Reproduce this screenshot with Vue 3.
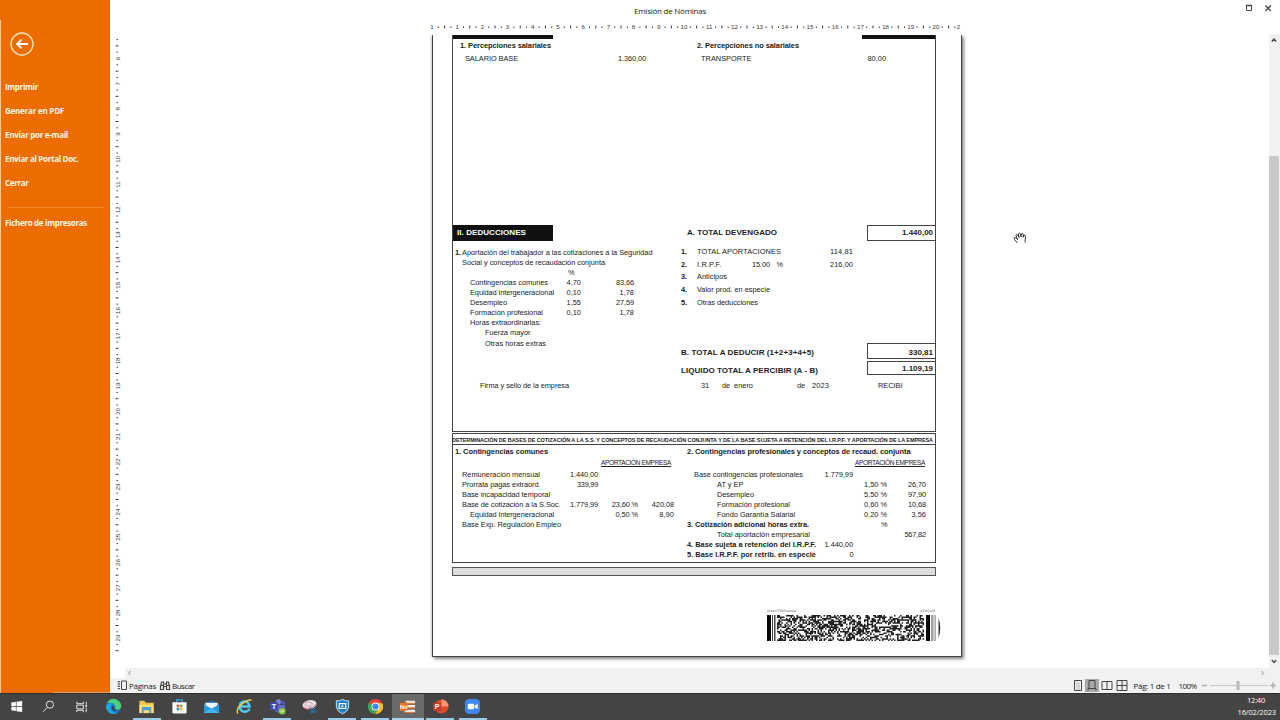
<script setup>
import { ref } from 'vue';

//stretch or tighten a text so it takes the printed width
const vFit = {
    mounted(el, { value }) {
        if (!value) return
        const natural = el.getBoundingClientRect().width
        el.style.letterSpacing = (value - natural) / el.textContent.length + 'px'
    }
}

const menu = ref([
    { text: 'Imprimir', w: 33 },
    { text: 'Generar en PDF', w: 59 },
    { text: 'Enviar por e-mail', w: 63 },
    { text: 'Enviar al Portal Doc.', w: 73.5 },
    { text: 'Cerrar', w: 23.5 },
])

//left side of the deductions: label, width, percent, amount, indent
const aportaciones = ref([
    { label: 'Contingencias comunes', w: 78, pct: '4,70', amount: '83,66' },
    { label: 'Equidad intergeneracional', w: 84, pct: '0,10', amount: '1,78' },
    { label: 'Desempleo', w: 37, pct: '1,55', amount: '27,59' },
    { label: 'Formación profesional', w: 73, pct: '0,10', amount: '1,78' },
    { label: 'Horas extraordinarias:', w: 71 },
    { label: 'Fuerza mayor', w: 45.5, sub: true },
    { label: 'Otras horas extras', w: 61, sub: true },
])

const deducciones = ref([
    { n: '1.', label: 'TOTAL APORTACIONES', w: 84, amount: '114,81' },
    { n: '2.', label: 'I.R.P.F.', w: 24.5, pct: '15.00', amount: '216,00' },
    { n: '3.', label: 'Anticipos', w: 30 },
    { n: '4.', label: 'Valor prod. en especie', w: 73 },
    { n: '5.', label: 'Otras deducciones', w: 61 },
])

const comunes = ref([
    { label: 'Remuneración mensual', w: 78, base: '1.440,00' },
    { label: 'Prorrata pagas extraord.', w: 78.5, base: '339,99' },
    { label: 'Base incapacidad temporal', w: 88 },
    { label: 'Base de cotización a la S.Soc.', w: 98.5, base: '1.779,99', pct: '23,60 %', amount: '420,08' },
    { label: 'Equidad intergeneracional', w: 84, sub: true, pct: '0,50 %', amount: '8,90' },
    { label: 'Base Exp. Regulación Empleo', w: 99 },
])

const profesionales = ref([
    { label: 'Base contingencias profesionales', w: 109, kind: 'base', base: '1.779,99' },
    { label: 'AT y EP', w: 26.5, kind: 'sub', pct: '1,50 %', amount: '26,70' },
    { label: 'Desempleo', w: 37, kind: 'sub', pct: '5,50 %', amount: '97,90' },
    { label: 'Formación profesional', w: 73, kind: 'sub', pct: '0,60 %', amount: '10,68' },
    { label: 'Fondo Garantía Salarial', w: 78, kind: 'sub', pct: '0,20 %', amount: '3,56' },
    { label: '3. Cotización adicional horas extra.', w: 122, kind: 'bold', pct: '%' },
    { label: 'Total aportación empresarial', w: 93, kind: 'sub', amount: '567,82' },
    { label: '4. Base sujeta a retención del I.R.P.F.', w: 129, kind: 'bold', base: '1.440,00' },
    { label: '5. Base I.R.P.F. por retrib. en especie', w: 129, kind: 'bold', base: '0' },
])

//ruler marks, 25.2px per centimetre
const CM = 25.2
const marks = (from, to, origin, max) => {
    const list = []
    for (let q = from * 4; q <= to * 4; q++) {
        const pos = origin + (q / 4) * CM
        if (pos > max) break
        list.push({ pos, label: q % 4 === 0 ? q / 4 : null, half: q % 4 === 2 })
    }
    return list
}
const hMarks = marks(0, 20.75, 2, 530)
const vMarks = marks(5.25, 29.5, -127.7, 620)

//dots of the 2D code
let seed = 71
const rnd = () => {
    seed = (seed * 16807) % 2147483647
    return seed / 2147483647
}
let dots = ''
for (let y = 0; y < 18; y++) {
    for (let x = 0; x < 98; x++) {
        if (rnd() < 0.54) dots += `M${(10 + x * 1.5).toFixed(1)} ${(y * 1.45).toFixed(1)}h1.55v1.5h-1.55z`
    }
}
</script>

<template>
    <div class="screen">
        <div class="work">
            <aside class="sidebar">
                <svg class="back" width="24" height="24" viewBox="0 0 24 24">
                    <circle cx="12" cy="12" r="11" />
                    <path class="arrow" d="M18 12H7M11.500 7.700L7 12l4.500 4.300" />
                </svg>
                <nav>
                    <div v-for="m in menu" :key="m.text" class="item"><span v-fit="m.w">{{ m.text }}</span></div>
                    <hr>
                    <div class="item"><span v-fit="82">Fichero de impresoras</span></div>
                </nav>
            </aside>

            <main class="viewer">
                <header>
                    <span class="title"><span v-fit="72">Emisión de Nóminas</span></span>
                    <svg class="winbtns" width="30" height="10" viewBox="0 0 30 10">
                        <path d="M2.500 2.500h5v5h-5z" /><path d="M2 2.500h6" stroke-width="1.500" />
                        <path d="M21.500 2.500l5.500 5.500M27 2.500l-5.500 5.500" stroke-width="1.300" />
                    </svg>
                </header>

                <svg class="hruler" width="540" height="14">
                    <template v-for="m in hMarks" :key="m.pos">
                        <text v-if="m.label !== null" :x="m.pos" y="8">{{ m.label || 1 }}</text>
                        <rect v-else :x="m.pos - 0.5" :y="m.half ? 4.500 : 5.500" width="1" :height="m.half ? 3 : 1.500" />
                    </template>
                    <text x="528.500" y="8">2</text>
                </svg>

                <div class="desk">
                    <svg class="vruler" width="15" height="633">
                        <template v-for="m in vMarks" :key="m.pos">
                            <text v-if="m.label !== null" :transform="`translate(9.500 ${m.pos}) rotate(-90)`">{{ m.label }}</text>
                            <rect v-else :x="m.half ? 5.500 : 6.500" :y="m.pos - 0.5" :width="m.half ? 3 : 1.500" height="1" />
                        </template>
                    </svg>

                    <article class="paper">
                        <section class="frame nomina">
                            <div class="topbars"><i></i><i></i></div>
                            <div class="cols percep">
                                <div class="left">
                                    <p class="b"><span v-fit="91">1. Percepciones salariales</span></p>
                                    <p class="line"><span v-fit="53">SALARIO BASE</span><span v-fit="28">1.360,00</span></p>
                                </div>
                                <div class="right">
                                    <p class="b"><span v-fit="102">2. Percepciones no salariales</span></p>
                                    <p class="line"><span v-fit="50.5">TRANSPORTE</span><span v-fit="18.5">80,00</span></p>
                                </div>
                            </div>

                            <div class="heading">
                                <span class="black"><span v-fit="69">II. DEDUCCIONES</span></span>
                                <span class="big devengado"><span v-fit="90">A. TOTAL DEVENGADO</span></span>
                                <span class="box"><span v-fit="31">1.440,00</span></span>
                            </div>

                            <div class="cols deduc">
                                <div class="left">
                                    <p class="intro"><b>1.</b><span v-fit="190.500">Aportación del trabajador a las cotizaciones a la Seguridad</span></p>
                                    <p class="intro cont"><span v-fit="143">Social y conceptos de recaudación conjunta</span></p>
                                    <p class="percent">%</p>
                                    <div v-for="a in aportaciones" :key="a.label" class="row3" :class="{ sub: a.sub }">
                                        <span><span v-fit="a.w">{{ a.label }}</span></span>
                                        <span class="num"><span v-if="a.pct" v-fit="14.500">{{ a.pct }}</span></span>
                                        <span class="num"><span v-if="a.amount" v-fit="a.amount.length * 3.6">{{ a.amount }}</span></span>
                                    </div>
                                    <p class="firma"><span v-fit="89">Firma y sello de la empresa</span></p>
                                </div>
                                <div class="right">
                                    <div v-for="d in deducciones" :key="d.n" class="row5">
                                        <b>{{ d.n }}</b>
                                        <span><span v-fit="d.w">{{ d.label }}</span></span>
                                        <span class="num"><span v-if="d.pct" v-fit="18">{{ d.pct }}</span></span>
                                        <span class="num">{{ d.pct ? '%' : '' }}</span>
                                        <span class="num"><span v-if="d.amount" v-fit="23">{{ d.amount }}</span></span>
                                    </div>
                                    <div class="total deducir">
                                        <span class="big"><span v-fit="133">B. TOTAL A DEDUCIR (1+2+3+4+5)</span></span>
                                        <span class="box"><span v-fit="24.500">330,81</span></span>
                                    </div>
                                    <div class="total liquido">
                                        <span class="big"><span v-fit="137">LIQUIDO TOTAL A PERCIBIR (A - B)</span></span>
                                        <span class="box"><span v-fit="31">1.109,19</span></span>
                                    </div>
                                    <div class="date">
                                        <div>31</div>
                                        <div>de</div>
                                        <div><span v-fit="19">enero</span></div>
                                        <div>de</div>
                                        <div><span v-fit="17">2023</span></div>
                                        <div><span v-fit="24.500">RECIBI</span></div>
                                    </div>
                                </div>
                            </div>
                        </section>

                        <section class="frame bases">
                            <p class="caption"><span v-fit="481">DETERMINACIÓN DE BASES DE COTIZACIÓN A LA S.S. Y CONCEPTOS DE RECAUDACIÓN CONJUNTA Y DE LA BASE SUJETA A RETENCIÓN DEL I.R.P.F. Y APORTACIÓN DE LA EMPRESA</span></p>
                            <div class="cols">
                                <div class="left">
                                    <p class="b"><span v-fit="93">1. Contingencias comunes</span></p>
                                    <p class="apor"><span v-fit="70">APORTACIÓN EMPRESA</span></p>
                                    <div v-for="c in comunes" :key="c.label" class="row4" :class="{ sub: c.sub }">
                                        <span><span v-fit="c.w">{{ c.label }}</span></span>
                                        <span class="num"><span v-if="c.base" v-fit="c.base.length * 3.5">{{ c.base }}</span></span>
                                        <span class="num"><span v-if="c.pct" v-fit="c.pct.length * 3.75">{{ c.pct }}</span></span>
                                        <span class="num"><span v-if="c.amount" v-fit="c.amount.length * 3.7">{{ c.amount }}</span></span>
                                    </div>
                                </div>
                                <div class="right">
                                    <p class="b"><span v-fit="223.500">2. Contingencias profesionales y conceptos de recaud. conjunta</span></p>
                                    <p class="apor"><span v-fit="70">APORTACIÓN EMPRESA</span></p>
                                    <div v-for="p in profesionales" :key="p.label" class="row4" :class="p.kind">
                                        <span><span v-fit="p.w">{{ p.label }}</span></span>
                                        <span class="num"><span v-if="p.base" v-fit="p.base.length * 3.55">{{ p.base }}</span></span>
                                        <span class="num"><span v-if="p.pct" v-fit="p.pct.length > 1 ? 23 : 6">{{ p.pct }}</span></span>
                                        <span class="num"><span v-if="p.amount" v-fit="p.amount.length * 3.6">{{ p.amount }}</span></span>
                                    </div>
                                </div>
                            </div>
                        </section>

                        <div class="graybar"></div>

                        <div class="code">
                            <p><span>www.f1f00aaaaa</span><span>p1e0a0f</span></p>
                            <svg width="175" height="27" viewBox="0 0 175 27">
                                <path d="M0 0h4v26h-4zM159 0h4v26h-4z" fill="#080808" />
                                <path d="M5 0h1v26h-1zM7 0h1.500v26h-1.500zM164.500 0h1v26h-1z" fill="#444" />
                                <path d="M166.500 0h1v26h-1zM168 0h.8v26h-.8z" fill="#999" />
                                <path :d="dots" fill="#222" />
                                <path d="M171.500 3q3.500 10 0 20z" fill="#333" />
                            </svg>
                        </div>
                    </article>

                    <svg class="cursor" width="16" height="16" viewBox="0 0 16 16">
                        <path d="M5.500 13L2.500 9.500Q1.500 7 3.300 7.500L5.500 9.500 4 5.500Q4.300 4 5.500 4.800L7 7.500 6.300 3.800Q7.500 2.500 8.300 3.800L9 7 9.200 3.800q1.300-1 2 .3L11.300 7.200l.6-2.200q1.400-.3 1.600 1L13 12.500" />
                    </svg>

                    <div class="vscroll">
                        <svg width="11" height="12" viewBox="0 0 11 12"><path d="M2.800 7.500L5 5l2.200 2.500" /></svg>
                        <i></i>
                        <svg width="11" height="12" viewBox="0 0 11 12"><path d="M2.800 5L5 7.500l2.200-2.500" /></svg>
                    </div>
                </div>

                <footer>
                    <div class="hscroll"><span>‹</span><span>›</span></div>
                    <div class="status">
                        <svg width="11" height="11" viewBox="0 0 11 11"><path d="M4.500 1h5v8.500h-5z" /><path d="M1.800 1v9" stroke-width="2" stroke-dasharray="1.300 1" /></svg>
                        <span v-fit="27">Páginas</span>
                        <svg class="bino" width="12" height="11" viewBox="0 0 12 11"><path d="M1.500 5.500h3v4h-3zM7.500 5.500h3v4h-3zM2 5.500l.5-3.500h2v3.500M10 5.500L9.500 2h-2v3.500M4.500 4h3M4.500 6.500h3" /></svg>
                        <span v-fit="22.500">Buscar</span>
                        <div class="views">
                            <svg width="14" height="13" viewBox="0 0 14 13"><path d="M3.500 1.500h7v10h-7z" /><path d="M5 4h4M5 6h4M5 8h4M5 10h4" stroke="#999" stroke-width=".6" /></svg>
                            <svg class="on" width="14" height="13" viewBox="0 0 14 13"><path d="M4 1.500h6v8H4zM3 11.500v-2h8v2" /></svg>
                            <svg width="14" height="13" viewBox="0 0 14 13"><path d="M2 2.500h10v8H2zM7 2.500v8" /></svg>
                            <svg width="14" height="13" viewBox="0 0 14 13"><path d="M2 1.500h10v10H2zM7 1.500v10M2 6.500h10" /></svg>
                        </div>
                        <span class="pag" v-fit="37">Pág: 1 de 1</span>
                        <span v-fit="18">100%</span>
                        <svg class="zoom" width="76" height="13" viewBox="0 0 76 13">
                            <path d="M0 6.500h5M68 6.500h6M71 3.500v6" stroke="#b0b0b0" stroke-width="1.500" />
                            <path d="M8 6.500h58" stroke="#c8c8c8" />
                            <path d="M36 2v9" stroke="#b9b9b9" stroke-width="3" />
                        </svg>
                    </div>
                </footer>
            </main>
        </div>

        <div class="taskbar">
            <span class="app"><svg viewBox="0 0 18 18"><path fill="#fff" d="M3.500 4.800l4.800-.7v4.500H3.500zM9 4l6-.9v5.500H9zM3.500 9.300h4.800v4.500l-4.800-.7zM9 9.300h6v5.500L9 13.900z" /></svg></span>
            <span class="app"><svg viewBox="0 0 18 18" fill="none" stroke="#eee"><circle cx="10.500" cy="7" r="3.800" /><path d="M7.800 9.800L3.500 14.500" /></svg></span>
            <span class="app"><svg viewBox="0 0 18 18" fill="none" stroke="#eee"><path d="M4 4v2h7V4M4 7.500h7v4H4zM4 15v-2h7v2M14 4v3M14 10.500V15" /><circle cx="14" cy="8.500" r=".8" /></svg></span>
            <span class="app"><svg viewBox="0 0 18 18"><circle cx="9" cy="9" r="8" fill="#1478cc" /><path d="M2 5.500Q6-1 12 1.500 18 4 17 10q-1.500 3-5 2.500-2-1-1-3Q10 5.500 6 5 3.500 4.800 2 5.500z" fill="#48d179" /><path d="M1 8Q4 4.500 8 6q-3 2-1.500 6 2 4 7 3.500Q10 18 6 16.500 1 14 1 8z" fill="#1ba6df" /><path d="M8 8q-2 3 .5 5 3 1.500 6 0Q10 13 9.500 10.500z" fill="#30424f" /></svg></span>
            <span class="app run"><svg viewBox="0 0 18 18"><path d="M1.500 3h5l2 2h8v11h-15z" fill="#f3c449" /><path d="M1.500 7h15v9h-15z" fill="#fbdc76" /><path d="M4 9.500h10V16h-2v-3H6v3H4z" fill="#4c9fd2" /></svg></span>
            <span class="app"><svg viewBox="0 0 18 18"><path d="M6 5V2h6v3" fill="none" stroke="#35ace8" stroke-width="1.300" /><path d="M1.500 4.500h15V15q0 1.500-1.500 1.500H3Q1.500 16.500 1.500 15z" fill="#f4f7f8" /><path d="M6 7h2.700v2.700H6z" fill="#ed5036" /><path d="M9.300 7H12v2.700H9.300z" fill="#75b82e" /><path d="M6 10.300h2.700V13H6z" fill="#2497d5" /><path d="M9.300 10.300H12V13H9.300z" fill="#f8b51c" /></svg></span>
            <span class="app"><svg viewBox="0 0 18 18"><path d="M1 6.500L9 2l8 4.500V16H1z" fill="#1565a7" /><path d="M2.500 5h13v6h-13z" fill="#e9f3f8" /><path d="M1 6.500l8 5 8-5V16H1z" fill="#259ae0" /><path d="M1 16l8-5.500 8 5.500z" fill="#42b8f2" /></svg></span>
            <span class="app"><svg viewBox="0 0 18 18" fill="none"><path d="M14.500 11.500Q12 15 8.500 14.500 4 13.500 4 9t4.500-5.300q5-.2 5.800 5.300H5" stroke="#55c5ed" stroke-width="2.600" /><path d="M2 16.500Q-.5 12 6 6.500 13 1 16.500 2.500" stroke="#f1ce48" stroke-width="1.500" /></svg></span>
            <span class="app run"><svg viewBox="0 0 18 18"><circle cx="10" cy="4" r="2.700" fill="#7c83e2" /><circle cx="15" cy="5" r="2" fill="#5159b8" /><path d="M6 7.500h11V12q-1 4-5 4-5 0-6-4z" fill="#6269c9" /><path d="M1 4.500h8.500V13H1z" fill="#434bb2" /><text x="5.200" y="11.500" font-size="7.500">T</text><circle cx="14" cy="14" r="3.500" fill="#8ac63f" /><path d="M12.300 14l1.200 1.200 2-2.300" fill="none" stroke="#fff" /></svg></span>
            <span class="app"><svg viewBox="0 0 18 18"><ellipse cx="9" cy="7" rx="7.500" ry="4.800" fill="#e6e2e4" transform="rotate(-12 9 7)" /><ellipse cx="8" cy="6.500" rx="4" ry="2.200" fill="none" stroke="#d68a98" stroke-width=".8" /><path d="M2.500 10q7 4.500 13-3" stroke="#cb5366" fill="none" /><path d="M9 10l5 5.500M15 10l-4 5" stroke="#2a6fa0" stroke-width="1.200" /><circle cx="11" cy="15" r="1.300" fill="none" stroke="#2a6fa0" /><circle cx="15" cy="14" r="1.300" fill="none" stroke="#2a6fa0" /></svg></span>
            <span class="app run"><svg viewBox="0 0 18 18"><path d="M2.500 3Q6 3.500 9 1.500q3 2 6.500 1.500v6.500Q15 14 9 16.800 3 14 2.500 9.500z" fill="#1680cb" stroke="#d3edf8" /><path d="M5.500 6h7v5h-7z" fill="none" stroke="#fff" stroke-width="1.200" /><path d="M8 7.500l2.500 1L8 9.800z" fill="#fff" /></svg></span>
            <span class="app run"><svg viewBox="0 0 18 18"><circle cx="9" cy="9" r="8" fill="#ea4335" /><path d="M9 9L2 5.100A8 8 0 0 0 9 17l4-6z" fill="#34a853" /><path d="M9 5.500h7.200A8 8 0 0 1 9 17l3.500-6z" fill="#fbc116" /><circle cx="9" cy="9" r="4.200" fill="#fff" /><circle cx="9" cy="9" r="3.300" fill="#4285f4" /></svg></span>
            <span class="app active"><svg viewBox="0 0 18 18"><path d="M6 3h11v2.500H9zM8 7.500h9V10H8zM6 12.500h11V15H6z" fill="#f8e7da" /><path d="M6 5.500h11v1H6zM6 10h11v1H6zM6 15h11v1H6z" fill="#ef7622" /><path d="M1 5h8v8.500H1z" fill="#ee741f" /><text x="5" y="11.300" font-size="6">No</text></svg></span>
            <span class="app run"><svg viewBox="0 0 18 18"><circle cx="10" cy="9" r="7.500" fill="#d84d2c" /><path d="M10 1.500A7.500 7.500 0 0 1 17.500 9H10z" fill="#ff9470" /><path d="M1 5h8.500v8.500H1z" fill="#c43a1c" /><text x="5.300" y="11.800" font-size="7.500">P</text></svg></span>
            <span class="app run"><svg viewBox="0 0 18 18"><rect x="1" y="1" width="16" height="16" rx="4.500" fill="#3d86f5" /><rect x="4" y="6" width="6.800" height="6" rx="1.200" fill="#fff" /><path d="M11.500 8l3-2v6l-3-2z" fill="#fff" /></svg></span>
            <div class="clock"><span v-fit="18">12:40</span><span v-fit="38.500">16/02/2023</span></div>
        </div>
    </div>
</template>

<style>
html, body{
    margin: 0;
    overflow: hidden;
}
</style>

<style scoped>
.screen{
    display: flex;
    flex-direction: column;
    width: 1280px;
    height: 720px;
    background: #fff;
    color: #222;
    font-family: "Liberation Sans", Arial, sans-serif;
    font-size: 7.4px;
    line-height: 10px;
    white-space: nowrap;
    overflow: hidden;
}

p{
    margin: 0;
}

.work{
    display: flex;
    height: 693px;
}

/* orange menu */
.sidebar{
    box-sizing: border-box;
    width: 110px;
    padding: 32px 5px 0;
    background: linear-gradient(#f6c796, #f6c796) 0 20px / 1px 673px no-repeat,
        linear-gradient(#d9a260, #d9a260) 53px 692px / 57px 1px no-repeat, #ec6c00;
    color: #fff5e6;
    font-family: "Open Sans", "Noto Sans", sans-serif;
    font-size: 8px;
    font-weight: 700;
}

.back{
    display: block;
    margin-left: 5px;
    fill: none;
    stroke: #ffe3b8;
    stroke-width: 1.3;
}

.back .arrow{
    stroke: #fff;
    stroke-width: 1.8;
}

nav{
    padding-top: 19px;
}

.item{
    height: 24px;
    line-height: 24px;
}

hr{
    height: 1px;
    margin: 12px 1px 3px 3px;
    border: none;
    background: #f28a24;
}

/* preview area */
.viewer{
    display: flex;
    flex-direction: column;
    width: 1170px;
}

header{
    display: flex;
    align-items: center;
    height: 21px;
    font-family: "Open Sans", sans-serif;
    font-size: 8px;
}

.title{
    width: 1134px;
    padding-left: 524px;
    box-sizing: border-box;
}

.winbtns{
    margin-top: -5px;
    fill: none;
    stroke: #444;
}

.hruler{
    margin-left: 320px;
}

.hruler, .vruler{
    flex: none;
    fill: #3c3c3c;
    font-size: 6.2px;
    text-anchor: middle;
}

.desk{
    position: relative;
    display: flex;
    height: 633px;
}

.paper{
    box-sizing: border-box;
    width: 530px;
    height: 622px;
    margin-left: 307px;
    padding: 0 25px 0 19px;
    border: 1px solid #444;
    border-top: none;
    box-shadow: 2px 2px 3px #888, -1px 0 2px #ccc;
    clip-path: inset(0 -8px -8px -8px);
}

.frame{
    box-sizing: border-box;
    width: 484px;
    border: 1px solid #444;
}

.nomina{
    height: 397px;
    border-top: none;
}

.topbars{
    display: flex;
    justify-content: space-between;
    height: 4px;
}

.topbars i{
    width: 100px;
    background: #111;
}

.topbars i + i{
    width: 73px;
}

.cols{
    display: grid;
    grid-template-columns: 222px 260px;
}

.b{
    font-weight: 700;
    font-size: 7.5px;
}

.percep{
    height: 186px;
    padding-top: 2px;
    box-sizing: border-box;
}

.percep .left{
    padding-left: 7px;
}

.percep .right{
    padding-left: 22px;
}

.line{
    display: flex;
    justify-content: space-between;
    padding: 3px 29px 0 5px;
}

.right .line{
    padding: 3px 49px 0 4px;
}

.heading{
    display: flex;
    height: 16px;
    line-height: 16px;
    font-weight: 700;
}

.black{
    width: 96px;
    padding-left: 4px;
    background: #111;
    color: #fff;
    font-size: 8px;
}

.big{
    font-weight: 700;
    font-size: 8px;
}

.devengado{
    width: 180px;
    padding-left: 134px;
}

.box{
    box-sizing: border-box;
    width: 69px;
    margin-right: -1px;
    padding-right: 2px;
    border: 1px solid #444;
    text-align: right;
    font-weight: 700;
    font-size: 8px;
    line-height: 14px;
}

.deduc .left{
    padding-top: 7px;
}

.deduc .right{
    padding: 4px 0 0 6px;
}

.intro{
    padding-left: 2px;
    height: 10px;
}

.intro b{
    display: inline-block;
    width: 7px;
}

.cont{
    padding-left: 9px;
}

.percent{
    padding-left: 115px;
    height: 10px;
}

.row3{
    display: grid;
    grid-template-columns: 84px 27px 53px;
    height: 10.1px;
    padding-left: 17px;
}

.row3.sub{
    padding-left: 32px;
}

.num{
    text-align: right;
}

.firma{
    padding: 32px 0 0 27px;
}

.row5{
    display: grid;
    grid-template-columns: 16px 43px 30px 13px 70px;
    height: 12.7px;
    line-height: 13px;
}

.total{
    display: flex;
    justify-content: space-between;
}

.deducir{
    height: 16px;
    margin-top: 34.5px;
    line-height: 19px;
}

.liquido{
    height: 14px;
    margin-top: 2px;
    line-height: 20px;
}

.deducir .box{
    line-height: 18px;
}

.liquido .box{
    line-height: 13px;
}

.date{
    display: grid;
    grid-template-columns: 21px 12px 63px 15px 66px 30px;
    padding: 6px 0 0 20px;
}

.bases{
    height: 130px;
    margin-top: 1px;
}

.caption{
    height: 10px;
    margin-left: -1px;
    border-bottom: 1px solid #444;
    color: #222;
    font-size: 5.5px;
    line-height: 12px;
    font-weight: 700;
}

.bases .left{
    padding-left: 2px;
}

.bases .b{
    padding-top: 2px;
    height: 10px;
}

.bases .right .b{
    padding-left: 12px;
}

.apor{
    height: 12px;
    padding: 1px 0 0 146px;
    font-size: 6.5px;
    text-decoration: underline;
}

.right .apor{
    padding-left: 180px;
}

.left .row4{
    display: grid;
    grid-template-columns: 99px 37px 40px 36px;
    height: 10px;
    padding-left: 7px;
}

.left .row4.sub{
    grid-template-columns: 91px 37px 40px 36px;
    padding-left: 15px;
}

.right .row4{
    display: grid;
    grid-template-columns: 141px 37px 34px 39px;
    height: 10.05px;
}

.base > :first-child{
    padding-left: 19px;
}

.right .sub > :first-child{
    padding-left: 42px;
}

.bold > :first-child{
    padding-left: 12px;
    font-weight: 700;
}

.graybar{
    box-sizing: border-box;
    width: 484px;
    height: 9px;
    margin-top: 4px;
    border: 1px solid #555;
    background: #dcdcdc;
}

.code{
    margin: 32px 0 0 315px;
    width: 175px;
}

.code p{
    display: flex;
    justify-content: space-between;
    width: 168px;
    height: 7px;
    color: #777;
    font-size: 4px;
    line-height: 6px;
}

.code svg{
    display: block;
}

/* hand over the page area */
.cursor{
    position: absolute;
    left: 902px;
    top: 195px;
    fill: #fff;
    stroke: #222;
    stroke-width: .9;
}

.vscroll{
    display: flex;
    flex-direction: column;
    width: 11px;
    margin-left: auto;
    margin-top: -1px;
    background: #f1f1f1;
}

.vscroll svg{
    fill: none;
    stroke: #444;
    stroke-width: 1.3;
}

.vscroll i{
    height: 499px;
    margin: 110px 1px 0 0;
    background: #c9c9c9;
}

footer{
    height: 25px;
    background: linear-gradient(#fff, #fff) 0 0 / 15px 10px no-repeat, #f1f1f1;
    font-family: "Open Sans", "Noto Sans", sans-serif;
    font-size: 8px;
}

.hscroll{
    display: flex;
    justify-content: space-between;
    height: 10px;
    padding: 0 16px 0 18px;
    color: #999;
    font-size: 10px;
    line-height: 8px;
}

.status{
    display: flex;
    align-items: center;
    height: 15px;
    padding-left: 7px;
}

.status svg{
    flex: none;
    fill: none;
    stroke: #444;
}

.status > svg:first-child{
    margin-right: 1px;
}

.status .bino{
    margin: 0 1px 0 3px;
    stroke-width: 1.2;
}

.views{
    display: flex;
    gap: .7px;
    margin-left: 876px;
}

.views .on{
    background: #a8a8a8;
}

.pag{
    margin: 0 8px 0 5px;
}

.zoom{
    margin-left: 5px;
}

/* windows taskbar */
.taskbar{
    display: flex;
    height: 26px;
    border-top: 1px solid #2e2e2e;
    background: #444;
}

.app{
    display: flex;
    justify-content: center;
    align-items: center;
    width: 28px;
    margin-right: 4.65px;
    border-bottom: 2px solid transparent;
}

.app:first-child{
    margin-left: 2px;
}

.app svg{
    width: 17px;
    height: 17px;
}

.app text{
    fill: #fff;
    font-weight: 700;
    text-anchor: middle;
}

.app.run{
    border-color: #9ccbe8;
}

.app.active{
    width: 32px;
    margin: 0 2.65px 0 -2px;
    border-color: #a9d5ee;
    background: #6a6a6a;
}

.clock{
    display: flex;
    flex-direction: column;
    align-items: flex-end;
    margin: 0 4px 0 auto;
    color: #fff;
    font-family: "Open Sans", sans-serif;
    font-size: 7.5px;
    line-height: 12px;
}

.clock span:first-child{
    margin-right: 11px;
}
</style>
